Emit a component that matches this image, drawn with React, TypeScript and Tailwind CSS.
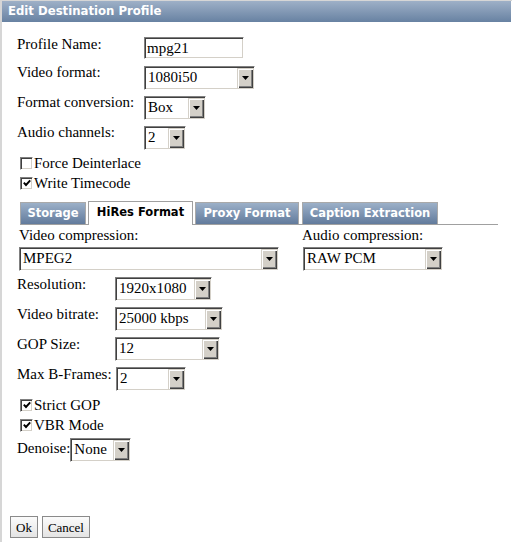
import React from 'react'

const serif = "font-['Liberation_Serif','Times_New_Roman',serif]"

function Arrow() {
  return (
    <div className="flex h-full w-[16px] shrink-0 items-center justify-center bg-[#d4d0c8] shadow-[inset_1px_1px_0_#d4d0c8,inset_2px_2px_0_#ffffff,inset_-1px_-1px_0_#404040,inset_-2px_-2px_0_#808080]">
      <svg width="7" height="4" viewBox="0 0 7 4">
        <path d="M0 0h7L3.5 4z" fill="#000" />
      </svg>
    </div>
  )
}

function Select({ value, w }: { value: string; w: string }) {
  return (
    <div
      className={`flex h-[24px] shrink-0 ${w} border border-t-[#808080] border-l-[#808080] border-r-white border-b-white bg-white p-px shadow-[inset_1px_1px_0_#404040,inset_-1px_-1px_0_#d4d0c8]`}
    >
      <div className="flex flex-1 items-center overflow-hidden whitespace-nowrap pb-px pl-[2px] leading-[17px]">{value}</div>
      <Arrow />
    </div>
  )
}

function Check({ checked, label }: { checked: boolean; label: string }) {
  return (
    <div className="flex h-[20px] items-center pl-[3px]">
      <div className="flex h-[13px] w-[13px] items-center justify-center border border-t-[#808080] border-l-[#808080] border-r-white border-b-white bg-white shadow-[inset_1px_1px_0_#404040,inset_-1px_-1px_0_#d4d0c8]">
        {checked && (
          <svg width="8" height="8" viewBox="0 0 8 8">
            <polyline points="0.8,3.6 3,6 7.2,1.4" fill="none" stroke="#000" strokeWidth="1.9" />
          </svg>
        )}
      </div>
      <span className="ml-px leading-[17px]">{label}</span>
    </div>
  )
}

function Row({ label, lw, mt, children }: { label: string; lw: string; mt: string; children: React.ReactNode }) {
  return (
    <div className="flex items-start">
      <div className={`${lw} ${mt} shrink-0 whitespace-nowrap leading-[17px]`}>{label}</div>
      {children}
    </div>
  )
}

export default function App() {
  return (
    <div className={`h-[542px] w-[512px] overflow-hidden border-l-2 border-t border-[#d6d6d6] bg-white text-[15px] text-black ${serif}`}>
      {/* Title bar */}
      <div className="mr-px flex h-[21px] items-center bg-linear-to-b from-[#9eb0c7] to-[#6882a2] pl-[6px] font-['DejaVu_Sans',Verdana,sans-serif] text-[11.7px] font-bold text-white">
        Edit Destination Profile
      </div>

      {/* Main form */}
      <div className="pl-[15px]">
        <div className="mt-[15px]">
          <Row label="Profile Name:" lw="w-[127px]" mt="-mt-px">
            <div className="flex h-[22px] w-[100px] items-center border border-t-[#808080] border-l-[#808080] border-r-white border-b-white pl-[2px] shadow-[inset_1px_1px_0_#404040,inset_-1px_-1px_0_#d4d0c8]">
              mpg21
            </div>
          </Row>
        </div>
        <div className="mt-[7px] flex flex-col gap-[6px]">
          <Row label="Video format:" lw="w-[127px]" mt="-mt-[2px]">
            <Select value="1080i50" w="w-[111px]" />
          </Row>
          <Row label="Format conversion:" lw="w-[127px]" mt="-mt-[2px]">
            <Select value="Box" w="w-[62px]" />
          </Row>
          <Row label="Audio channels:" lw="w-[127px]" mt="-mt-[2px]">
            <Select value="2" w="w-[42px]" />
          </Row>
        </div>

        <div className="mt-[3px]">
          <Check checked={false} label="Force Deinterlace" />
          <Check checked label="Write Timecode" />
        </div>

        {/* Tabs */}
        <div className="ml-[3px] mt-[8px] flex h-[24px] w-[478px] items-end border-b border-[#a0a0a0] font-['DejaVu_Sans',Verdana,sans-serif] text-[11.5px] font-bold">
          <div className="flex h-[22px] w-[66px] items-center justify-center border border-b-0 border-[#a9a9a9] bg-linear-to-b from-[#9cb0c8] to-[#627b9c] text-white">
            Storage
          </div>
          <div className="relative -mb-px ml-[2px] flex h-[24px] w-[105px] items-center justify-center border border-b-0 border-[#a0a0a0] bg-white pb-px text-black">
            HiRes Format
          </div>
          <div className="ml-[2px] flex h-[22px] w-[104px] items-center justify-center border border-b-0 border-[#a9a9a9] bg-linear-to-b from-[#9cb0c8] to-[#627b9c] text-white">
            Proxy Format
          </div>
          <div className="ml-[3px] flex h-[22px] w-[136px] items-center justify-center border border-b-0 border-[#a9a9a9] bg-linear-to-b from-[#9cb0c8] to-[#627b9c] text-white">
            Caption Extraction
          </div>
        </div>

        {/* HiRes tab content */}
        <div className="mt-[2px] flex">
          <div className="ml-[2px] w-[283px]">
            <div className="leading-[17px]">Video compression:</div>
            <div className="mt-[3px]">
              <Select value="MPEG2" w="w-[260px]" />
            </div>
          </div>
          <div>
            <div className="leading-[17px]">Audio compression:</div>
            <div className="ml-px mt-[3px]">
              <Select value="RAW PCM" w="w-[140px]" />
            </div>
          </div>
        </div>

        <div className="mt-[6px] flex flex-col gap-[6px]">
          <Row label="Resolution:" lw="w-[98px]" mt="-mt-px">
            <Select value="1920x1080" w="w-[97px]" />
          </Row>
          <Row label="Video bitrate:" lw="w-[98px]" mt="-mt-px">
            <Select value="25000 kbps" w="w-[108px]" />
          </Row>
          <Row label="GOP Size:" lw="w-[98px]" mt="-mt-px">
            <Select value="12" w="w-[105px]" />
          </Row>
          <Row label="Max B-Frames:" lw="w-[99px]" mt="-mt-px">
            <Select value="2" w="w-[70px]" />
          </Row>
        </div>

        <div className="mt-[4px]">
          <Check checked label="Strict GOP" />
          <Check checked label="VBR Mode" />
        </div>

        <div className="mt-[3px] flex items-end">
          <span className="mb-[5px] leading-[17px]">Denoise:</span>
          <Select value="None" w="w-[61px]" />
        </div>
      </div>

      {/* Buttons */}
      <div className="ml-[8px] mt-[54px] flex gap-[4px] text-[13px]">
        <button className="h-[22px] border border-[#8a8a8a] bg-linear-to-b from-[#fbfbfb] to-[#e4e4e4] px-[5px] leading-[15px]">Ok</button>
        <button className="h-[22px] border border-[#8a8a8a] bg-linear-to-b from-[#fbfbfb] to-[#e4e4e4] px-[5px] leading-[15px]">Cancel</button>
      </div>
    </div>
  )
}
